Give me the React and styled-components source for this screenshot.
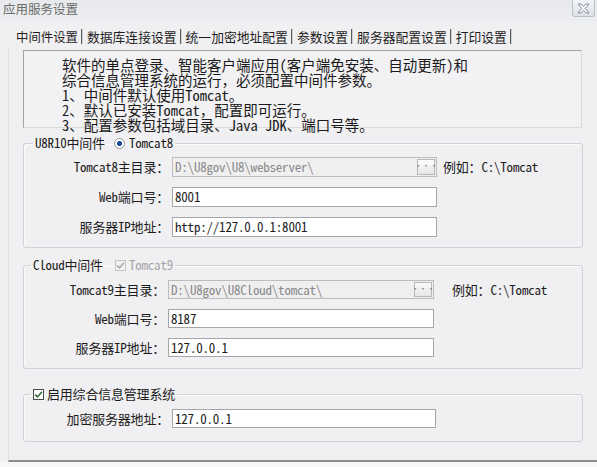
import React from 'react';
import styled, { createGlobalStyle } from 'styled-components';

const FONT = `"Noto Sans Mono CJK SC", "Liberation Mono", "Noto Sans CJK SC", monospace`;

const Global = createGlobalStyle`
  html, body { margin: 0; padding: 0; background: #f7f7f8; }
  body { font-family: ${FONT}; color: #1c1c1c; }
  * { box-sizing: border-box; }
`;

const Window = styled.div`
  width: 597px;
  height: 467px;
  overflow: hidden;
  background: #f0eff1;
  display: flex;
  flex-direction: column;
`;

const TitleBar = styled.div`
  height: 23px;
  flex: none;
  display: flex;
  align-items: flex-start;
  justify-content: space-between;
  background: linear-gradient(#e7e9ed, #eceef1);
`;

const Title = styled.div`
  font-family: "Noto Sans CJK SC", sans-serif;
  font-size: 12.5px;
  line-height: 18px;
  color: #6a6a6a;
  padding: 0 0 0 3px;
`;

const CloseButton = styled.div`
  width: 23px;
  height: 17px;
  margin-right: 2px;
  border: 1px solid #b9bec7;
  border-top: none;
  border-radius: 0 0 3px 3px;
  background: linear-gradient(#f3f4f7, #dde1e7);
  display: flex;
  align-items: center;
  justify-content: center;
`;

const TabStrip = styled.div`
  height: 24px;
  flex: none;
  display: flex;
  align-items: center;
  padding: 3px 0 0 16px;
`;

const Tab = styled.div`
  font-family: "Noto Sans CJK SC", sans-serif;
  font-size: ${p => (p.$active ? 12.4 : 12.8)}px;
  line-height: 18px;
  color: #1e1e1e;
`;

const TabSep = styled.div`
  width: 1px;
  height: 15px;
  background: #5a5a5a;
  margin: 0 5px 0 3px;
  box-shadow: 1px 0 0 #cfcfcf;
`;

const TabPage = styled.div`
  margin-left: 8px;
  border-left: 1px solid #dedde0;
  border-bottom: 2px solid #8b8b8b;
  padding: 3px 14px 18px 14px;
  display: flex;
  flex-direction: column;
`;

const Footer = styled.div`
  flex: 1;
  background: #f7f7f8;
`;

const InfoBox = styled.div`
  height: 78px;
  flex: none;
  border: 1px solid;
  border-color: #a2a2a2 #dadada #dadada #a2a2a2;
  width: 559px;
  background: #f2f1f3;
  padding: 6px 0 0 38px;
`;

const InfoLine = styled.div`
  font-size: 14.5px;
  line-height: 15px;
  color: #1a1a1a;
  white-space: nowrap;
`;

const Group = styled.fieldset`
  margin: ${p => p.$mt}px 0 0;
  padding: 0 0 ${p => p.$pb}px 0;
  border: 1px solid #d2d1d5;
  border-radius: 3px;
  box-shadow: inset 1px 1px 0 #fbfbfb;
  min-width: 0;
  flex: none;
`;

const Legend = styled.legend`
  margin-left: ${p => p.$ml}px;
  padding: 0 2px;
  height: 16px;
  display: flex;
  align-items: center;
  font-size: 13px;
  line-height: 16px;
  letter-spacing: -0.2px;
`;

const LegendText = styled.span`
  color: ${p => (p.$disabled ? '#a4a4a6' : '#1c1c1c')};
  font-family: ${p => (p.$sans ? `"Noto Sans CJK SC", sans-serif` : FONT)};
  margin-left: ${p => p.$ml || 0}px;
  line-height: 16px;
`;

const Radio = styled.span`
  width: 11px;
  height: 11px;
  border-radius: 50%;
  border: 1px solid #8e9aa8;
  background: radial-gradient(circle, #1f4f9a 0 2.3px, #ffffff 2.8px);
  margin-left: 9px;
`;

const Check = styled.span`
  width: 11px;
  height: 11px;
  border: 1px solid ${p => (p.$disabled ? '#c4c4c6' : '#4a4a4a')};
  background: ${p => (p.$disabled ? '#f2f2f3' : '#ffffff')};
  display: flex;
  align-items: center;
  justify-content: center;
  margin-left: ${p => p.$ml || 0}px;
`;

const Rows = styled.div`
  display: grid;
  grid-template-columns: ${p => p.$label}px ${p => p.$field}px auto;
  grid-auto-rows: ${p => p.$h}px;
  column-gap: 3px;
  row-gap: ${p => p.$gap}px;
  margin-top: ${p => p.$mt}px;
  align-items: center;
`;

const Label = styled.div`
  text-align: right;
  font-size: 13px;
  line-height: 16px;
  letter-spacing: -0.2px;
  white-space: nowrap;
  font-family: ${p => (p.$sans ? `"Noto Sans CJK SC", sans-serif` : FONT)};
`;

const Field = styled.div`
  height: 100%;
  border: 1px solid ${p => (p.$disabled ? '#bdbdbf' : '#a6a6a8')};
  background: ${p => (p.$disabled ? '#efeff0' : '#ffffff')};
  color: ${p => (p.$disabled ? '#8a8a8c' : '#1c1c1c')};
  font-size: 13px;
  line-height: 16px;
  letter-spacing: -0.2px;
  display: flex;
  align-items: center;
  padding-left: 2px;
  white-space: nowrap;
  overflow: hidden;
`;

const FieldText = styled.span`
  flex: 1;
`;

const BrowseButton = styled.span`
  width: 18px;
  height: calc(100% - 2px);
  margin-right: 1px;
  border: 1px solid #b7b7ba;
  background: linear-gradient(#fbfbfb, #e6e6e8);
  color: #7a7a7a;
  font-size: 8px;
  line-height: 8px;
  display: flex;
  justify-content: center;
  padding-top: 2px;
`;

const Hint = styled.div`
  margin-left: ${p => p.$ml}px;
  font-size: 13px;
  line-height: 16px;
  letter-spacing: -0.2px;
  white-space: nowrap;
`;

const Empty = styled.div``;

const CheckMark = ({ color }) => (
  <svg width="9" height="9" viewBox="0 0 9 9">
    <path d="M1.2 4.6 L3.5 6.9 L7.9 1.8" fill="none" stroke={color} strokeWidth="1.6" />
  </svg>
);

const CloseIcon = () => (
  <svg width="13" height="11" viewBox="0 0 13 11">
    <path
      d="M1 1 H4 L6.5 3.6 L9 1 H12 L8.2 5.5 L12 10 H9 L6.5 7.4 L4 10 H1 L4.8 5.5 Z"
      fill="#ffffff"
      stroke="#7f8da3"
      strokeWidth="1"
      strokeLinejoin="round"
    />
  </svg>
);

const FormRow = ({ label, value, disabled, browse, hint, hintMl }) => (
  <>
    <Label>{label}</Label>
    <Field $disabled={disabled}>
      <FieldText>{value}</FieldText>
      {browse && <BrowseButton>···</BrowseButton>}
    </Field>
    {hint ? <Hint $ml={hintMl}>{hint}</Hint> : <Empty />}
  </>
);

export default function App() {
  return (
    <>
      <Global />
      <Window>
        <TitleBar>
          <Title>应用服务设置</Title>
          <CloseButton>
            <CloseIcon />
          </CloseButton>
        </TitleBar>
        <TabStrip>
          {['中间件设置', '数据库连接设置', '统一加密地址配置', '参数设置', '服务器配置设置', '打印设置'].map(
            (t, i) => (
              <React.Fragment key={t}>
                <Tab $active={i === 0}>{t}</Tab>
                <TabSep />
              </React.Fragment>
            )
          )}
        </TabStrip>
        <TabPage>
          <InfoBox>
            <InfoLine>软件的单点登录、智能客户端应用(客户端免安装、自动更新)和</InfoLine>
            <InfoLine>综合信息管理系统的运行，必须配置中间件参数。</InfoLine>
            <InfoLine>1、中间件默认使用Tomcat。</InfoLine>
            <InfoLine>2、默认已安装Tomcat，配置即可运行。</InfoLine>
            <InfoLine>3、配置参数包括域目录、Java JDK、端口号等。</InfoLine>
          </InfoBox>

          <Group $mt={7} $pb={10}>
            <Legend $ml={9}>
              <LegendText>U8R10中间件</LegendText>
              <Radio />
              <LegendText $ml={4}>Tomcat8</LegendText>
            </Legend>
            <Rows $label={145} $field={265} $h={20} $gap={10} $mt={6}>
              <FormRow
                label="Tomcat8主目录："
                value="D:\U8gov\U8\webserver\"
                disabled
                browse
                hint="例如：C:\Tomcat"
                hintMl={3}
              />
              <FormRow label="Web端口号：" value="8001" />
              <FormRow label="服务器IP地址：" value="http://127.0.0.1:8001" />
            </Rows>
          </Group>

          <Group $mt={9} $pb={11}>
            <Legend $ml={7}>
              <LegendText>Cloud中间件</LegendText>
              <Check $disabled $ml={12}>
                <CheckMark color="#a8a8aa" />
              </Check>
              <LegendText $disabled $ml={3}>Tomcat9</LegendText>
            </Legend>
            <Rows $label={141} $field={266} $h={19} $gap={10} $mt={7}>
              <FormRow
                label="Tomcat9主目录："
                value="D:\U8gov\U8Cloud\tomcat\"
                disabled
                browse
                hint="例如：C:\Tomcat"
                hintMl={15}
              />
              <FormRow label="Web端口号：" value="8187" />
              <FormRow label="服务器IP地址：" value="127.0.0.1" />
            </Rows>
          </Group>

          <Group $mt={17} $pb={13}>
            <Legend $ml={7}>
              <Check>
                <CheckMark color="#2f6a3c" />
              </Check>
              <LegendText $sans $ml={3}>启用综合信息管理系统</LegendText>
            </Legend>
            <Rows $label={145} $field={264} $h={19} $gap={10} $mt={7}>
              <Label $sans>加密服务器地址：</Label>
              <Field>
                <FieldText>127.0.0.1</FieldText>
              </Field>
              <Empty />
            </Rows>
          </Group>
        </TabPage>
        <Footer />
      </Window>
    </>
  );
}
